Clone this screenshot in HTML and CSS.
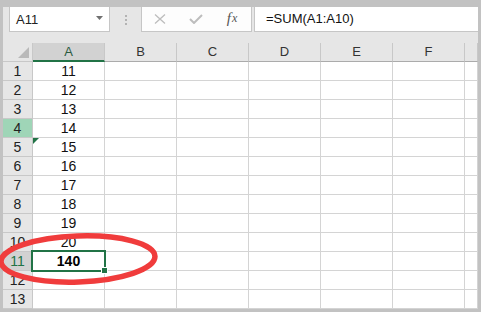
FILE: index.html
```html
<!DOCTYPE html>
<html lang="zh">
<head>
    <meta charset="UTF-8">
    <meta name="viewport" content="width=device-width, initial-scale=1.0">
    <title>SUM</title>
    <link rel="stylesheet" href="styles.css">
</head>
<body>

<div class="window">
    <div class="toolbar">
        <div class="namebox">
            <span>A11</span>
            <svg class="drop" width="7" height="4" viewBox="0 0 7 4"><polygon points="0,0 7,0 3.5,4" fill="#707070"/></svg>
        </div>
        <div class="grip"><i></i><i></i><i></i></div>
        <div class="fxbox">
            <span class="slot">
                <svg width="12" height="10" viewBox="0 0 12 10"><path d="M1 0.5 L11 9.5 M11 0.5 L1 9.5" stroke="#bdbdbd" stroke-width="1.3" fill="none"/></svg>
            </span>
            <span class="slot">
                <svg width="14" height="10" viewBox="0 0 14 10"><path d="M1 5 L5 9 L13 1" stroke="#bdbdbd" stroke-width="2" fill="none"/></svg>
            </span>
            <span class="slot fx"><i>f</i><i class="x">x</i></span>
        </div>
        <div class="formula">=SUM(A1:A10)</div>
    </div>

    <div class="sheet">
        <div class="row head">
            <div class="hd corner">
                <svg width="11" height="11" viewBox="0 0 11 11"><polygon points="11,0 11,11 0,11" fill="#b9b9b9"/></svg>
            </div>
            <div class="col a sel">A</div>
            <div class="col">B</div>
            <div class="col">C</div>
            <div class="col">D</div>
            <div class="col">E</div>
            <div class="col">F</div>
            <div class="col last"></div>
        </div>
        <div class="row"><div class="hd">1</div><div class="c a">11</div><div class="c"></div><div class="c"></div><div class="c"></div><div class="c"></div><div class="c"></div><div class="c last"></div></div>
        <div class="row"><div class="hd">2</div><div class="c a">12</div><div class="c"></div><div class="c"></div><div class="c"></div><div class="c"></div><div class="c"></div><div class="c last"></div></div>
        <div class="row"><div class="hd">3</div><div class="c a">13</div><div class="c"></div><div class="c"></div><div class="c"></div><div class="c"></div><div class="c"></div><div class="c last"></div></div>
        <div class="row"><div class="hd hover">4</div><div class="c a">14</div><div class="c"></div><div class="c"></div><div class="c"></div><div class="c"></div><div class="c"></div><div class="c last"></div></div>
        <div class="row"><div class="hd">5</div><div class="c a flag">15</div><div class="c"></div><div class="c"></div><div class="c"></div><div class="c"></div><div class="c"></div><div class="c last"></div></div>
        <div class="row"><div class="hd">6</div><div class="c a">16</div><div class="c"></div><div class="c"></div><div class="c"></div><div class="c"></div><div class="c"></div><div class="c last"></div></div>
        <div class="row"><div class="hd">7</div><div class="c a">17</div><div class="c"></div><div class="c"></div><div class="c"></div><div class="c"></div><div class="c"></div><div class="c last"></div></div>
        <div class="row"><div class="hd">8</div><div class="c a">18</div><div class="c"></div><div class="c"></div><div class="c"></div><div class="c"></div><div class="c"></div><div class="c last"></div></div>
        <div class="row"><div class="hd">9</div><div class="c a">19</div><div class="c"></div><div class="c"></div><div class="c"></div><div class="c"></div><div class="c"></div><div class="c last"></div></div>
        <div class="row"><div class="hd">10</div><div class="c a">20</div><div class="c"></div><div class="c"></div><div class="c"></div><div class="c"></div><div class="c"></div><div class="c last"></div></div>
        <div class="row"><div class="hd sel">11</div><div class="c a active">140</div><div class="c"></div><div class="c"></div><div class="c"></div><div class="c"></div><div class="c"></div><div class="c last"></div></div>
        <div class="row"><div class="hd">12</div><div class="c a"></div><div class="c"></div><div class="c"></div><div class="c"></div><div class="c"></div><div class="c"></div><div class="c last"></div></div>
        <div class="row"><div class="hd">13</div><div class="c a"></div><div class="c"></div><div class="c"></div><div class="c"></div><div class="c"></div><div class="c"></div><div class="c last"></div></div>
    </div>

    <!-- red circle drawn over the total -->
    <svg class="mark" width="481" height="312" viewBox="0 0 481 312">
        <ellipse cx="78" cy="259" rx="77" ry="23" transform="rotate(-2 78 259)" fill="none" stroke="#f03c3c" stroke-width="5.5"/>
    </svg>
</div>

</body>
</html>
```

FILE: styles.css
```css
body {
    margin: 0;
    font-family: "Liberation Sans", Arial, sans-serif;
}
.window {
    position: relative;
    width: 481px;
    height: 312px;
    box-sizing: border-box;
    padding: 7px 3px 3px 3px;
    background-color: #c2c2c2;
    overflow: hidden;
}
.toolbar {
    display: flex;
    align-items: flex-start;
    height: 36px;
    padding-left: 6px;
    background-color: #e6e6e6;
}
.namebox {
    display: flex;
    align-items: center;
    justify-content: space-between;
    width: 101px;
    height: 25px;
    box-sizing: border-box;
    padding: 0 6px 0 6px;
    background-color: white;
    border: 1px solid #c6c6c6;
    border-top: none;
    font-size: 13px;
    color: #222;
}
.namebox .drop {
    margin-top: -2px;
}
.grip {
    width: 31px;
    height: 25px;
    display: flex;
    flex-direction: column;
    align-items: center;
    justify-content: center;
    gap: 2px;
}
.grip i {
    display: block;
    width: 2px;
    height: 2px;
    background-color: #b3b3b3;
}
.fxbox {
    display: flex;
    width: 111px;
    height: 25px;
    box-sizing: border-box;
    background-color: #fdfdfd;
    border: 1px solid #c6c6c6;
    border-top: none;
}
.slot {
    width: 36px;
    display: flex;
    align-items: center;
    justify-content: center;
}
.fx {
    font-family: "Liberation Serif", "Times New Roman", serif;
    font-style: italic;
    color: #555;
    font-size: 15px;
    padding-bottom: 2px;
}
.fx i {
    font-style: italic;
}
.fx .x {
    font-size: 12px;
    margin-left: 1px;
}
.formula {
    flex: 1;
    height: 25px;
    box-sizing: border-box;
    margin-left: 2px;
    padding: 4px 0 0 11px;
    background-color: white;
    border-left: 1px solid #c6c6c6;
    border-bottom: 1px solid #c6c6c6;
    font-size: 13px;
    color: #111;
}
.sheet {
    background-color: white;
}
.row {
    display: flex;
    height: 19px;
}
.row > div {
    box-sizing: border-box;
    height: 19px;
    border-right: 1px solid #d4d4d4;
    border-bottom: 1px solid #d4d4d4;
    text-align: center;
    line-height: 18px;
}
.hd {
    width: 30px;
    background-color: #e6e6e6;
    font-size: 14px;
    color: #222;
    border-color: #c8c8c8 !important;
}
.hd.hover {
    background-color: #9fd5b7;
}
.hd.sel {
    background-color: #d2d2d2;
    color: #217346;
}
.corner {
    display: flex;
    align-items: flex-end;
    justify-content: flex-end;
    padding: 0 3px 3px 0;
}
.corner svg {
    display: block;
}
.head .col {
    background-color: #e6e6e6;
    font-size: 13px;
    color: #333;
    border-right-color: #c8c8c8;
    border-bottom-color: #ababab;
}
.head .col.sel {
    background-color: #d2d2d2;
    color: #2b5a3f;
    border-bottom: 2px solid #217346;
}
.a {
    width: 73px;
}
.col, .c {
    width: 72px;
}
.last {
    flex: 1;
}
.c {
    font-size: 14px;
    color: #111;
}
.c.flag {
    position: relative;
}
.c.flag::before {
    content: "";
    position: absolute;
    left: 0;
    top: 0;
    border-top: 6px solid #217346;
    border-right: 6px solid transparent;
}
.c.active {
    position: relative;
    font-weight: bold;
    color: #000;
}
.c.active::after {
    content: "";
    position: absolute;
    left: -2px;
    top: -2px;
    right: -2px;
    bottom: -2px;
    border: 2px solid #217346;
}
.c.active::before {
    content: "";
    position: absolute;
    right: -4px;
    bottom: -4px;
    width: 5px;
    height: 5px;
    background-color: #217346;
    border: 1px solid white;
    z-index: 2;
}
.mark {
    position: absolute;
    left: 0;
    top: 0;
    pointer-events: none;
}
```
